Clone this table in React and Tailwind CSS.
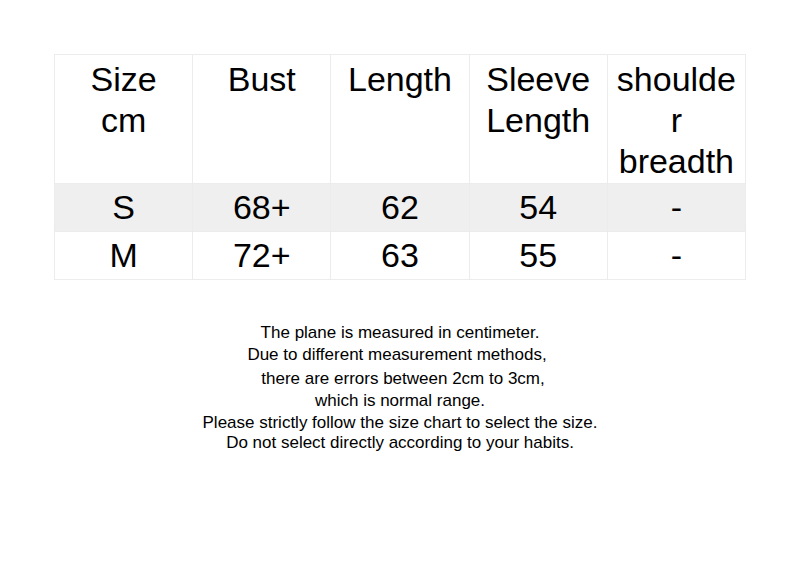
import React from 'react';

const headers = [['Size', 'cm'], ['Bust'], ['Length'], ['Sleeve', 'Length'], ['shoulde', 'r', 'breadth']];

const rows = [
  { size: 'S', values: ['68+', '62', '54', '-'], shaded: true },
  { size: 'M', values: ['72+', '63', '55', '-'], shaded: false },
];

const notes = [
  'The plane is measured in centimeter.',
  'Due to different measurement methods,',
  'there are errors between 2cm to 3cm,',
  'which is normal range.',
  'Please strictly follow the size chart to select the size.',
  'Do not select directly according to your habits.',
];

// small offsets so the note lines sit where the original image has them
const noteClass = ['', 'pr-[6px]', 'mt-[2px] pl-[6px]', '', '', 'mt-[-2px]'];

export default function App() {
  return (
    <div className="h-[566px] w-[800px] bg-white font-['Liberation_Sans',Arial,sans-serif] text-black">
      <div className="px-[54px] pt-[54px]">
        <div className="grid grid-cols-5 border-l border-t border-[#ececec]">
          {headers.map((lines) => (
            <div
              key={lines.join(' ')}
              className="h-[129px] border-b border-r border-[#ececec] pt-[4px] text-center text-[34px] leading-[41px]"
            >
              {lines.map((l) => (
                <div key={l}>{l}</div>
              ))}
            </div>
          ))}
          {rows.map((r) => (
            <React.Fragment key={r.size}>
              {[r.size, ...r.values].map((v, i) => (
                <div
                  key={i}
                  className={`flex h-[48px] items-center justify-center border-b border-r border-[#ececec] text-[34px] leading-[41px] ${
                    r.shaded ? 'bg-[#efefef]' : 'bg-white'
                  }`}
                >
                  {v}
                </div>
              ))}
            </React.Fragment>
          ))}
        </div>
      </div>

      <div className="mt-[42px] text-center text-[17px] leading-[22px]">
        {notes.map((n, i) => (
          <div key={i} className={noteClass[i]}>
            {n}
          </div>
        ))}
      </div>
    </div>
  );
}
